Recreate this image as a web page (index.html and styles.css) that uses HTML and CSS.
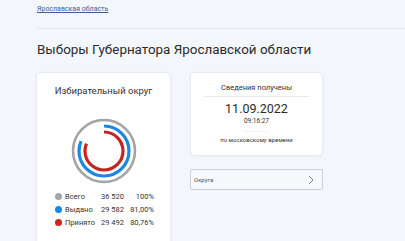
FILE: index.html
```html
<!DOCTYPE html>
<html lang="ru">
<head>
  <meta charset="UTF-8" />
  <meta name="viewport" content="width=device-width, initial-scale=1.0"/>
  <title>Выборы Губернатора Ярославской области</title>
  <link rel="stylesheet" href="styles.css">
</head>
<body>
  <div class="page">
    <nav class="breadcrumbs">
      <a href="#" class="crumb">Ярославская область</a>
    </nav>

    <h1 class="page-title">Выборы Губернатора Ярославской области</h1>

    <div class="cards">
      <section class="card turnout">
        <h2 class="card-title">Избирательный округ</h2>
        <svg class="rings" width="70" height="70" viewBox="0 0 70 70">
          <circle cx="35" cy="35" r="31" fill="none" stroke="#a4a4a4" stroke-width="2.6"/>
          <circle cx="35" cy="35" r="25" fill="none" stroke="#1a88e2" stroke-width="3.2"
                  stroke-dasharray="127.2 200" transform="rotate(-90 35 35)"/>
          <circle cx="35" cy="35" r="19" fill="none" stroke="#c4261f" stroke-width="3.2"
                  stroke-dasharray="96.4 200" transform="rotate(-90 35 35)"/>
        </svg>
        <ul class="legend">
          <li class="legend-row">
            <span class="dot gray"></span>
            <span class="legend-label">Всего</span>
            <span class="legend-value">36 520</span>
            <span class="legend-pct">100%</span>
          </li>
          <li class="legend-row">
            <span class="dot blue"></span>
            <span class="legend-label">Выдано</span>
            <span class="legend-value">29 582</span>
            <span class="legend-pct">81,00%</span>
          </li>
          <li class="legend-row">
            <span class="dot red"></span>
            <span class="legend-label">Принято</span>
            <span class="legend-value">29 492</span>
            <span class="legend-pct">80,76%</span>
          </li>
        </ul>
      </section>

      <div class="side">
        <section class="card info">
          <div class="info-title">Сведения получены</div>
          <div class="info-date">11.09.2022</div>
          <div class="info-time">09:16:27</div>
          <div class="info-note">по московскому времени</div>
        </section>

        <div class="select">
          <span class="select-label">Округа</span>
          <svg class="chevron" width="6" height="10" viewBox="0 0 6 10">
            <path d="M1 1 L5 5 L1 9" fill="none" stroke="#6b7280" stroke-width="0.9"/>
          </svg>
        </div>
      </div>
    </div>
  </div>
</body>
</html>
```

FILE: styles.css
```css
* {
  margin: 0;
  padding: 0;
  box-sizing: border-box;
}

body {
  font-family: Roboto, "Liberation Sans", Arial, sans-serif;
  background-color: #f3f6fb;
  color: #2b2b2b;
  height: 241px;
  overflow: hidden;
}

.page {
  padding-left: 37px;
}

.breadcrumbs {
  height: 29px;
  padding-top: 5px;
  font-size: 7px;
  line-height: 9px;
  border-bottom: 1px solid #e3e8f0;
}

.crumb {
  color: #3d5f8f;
  text-decoration: underline;
}

.page-title {
  font-size: 13.4px;
  font-weight: 400;
  margin-top: 11px;
  line-height: 20px;
  color: #2a2a2a;
}

.cards {
  display: flex;
  gap: 19px;
  margin-top: 12px;
  margin-left: -1px;
}

.card {
  background-color: #ffffff;
  border: 1px solid #e6eaf1;
  border-radius: 5px;
  box-shadow: 0 1px 3px rgba(60, 80, 120, 0.05);
}

.turnout {
  width: 135px;
  height: 180px;
  display: flex;
  flex-direction: column;
  align-items: center;
}

.card-title {
  font-size: 9.5px;
  font-weight: 400;
  margin-top: 12px;
  color: #333;
}

.rings {
  margin-top: 20px;
}

.legend {
  list-style: none;
  margin-top: 6px;
  margin-left: 2px;
  width: 99px;
  display: flex;
  flex-direction: column;
  gap: 4px;
}

.legend-row {
  display: flex;
  align-items: center;
  font-size: 7.5px;
  height: 9px;
  color: #333;
}

.dot {
  width: 7px;
  height: 7px;
  border-radius: 50%;
  margin-right: 3px;
}

.dot.gray { background-color: #a6a6a6; }
.dot.blue { background-color: #1589e6; }
.dot.red { background-color: #cf2419; }

.legend-label {
  width: 36px;
}

.legend-value {
  width: 25px;
}

.legend-pct {
  flex: 1;
  text-align: right;
}

.side {
  width: 133px;
  display: flex;
  flex-direction: column;
  gap: 13px;
}

.info {
  height: 84px;
  display: flex;
  flex-direction: column;
  align-items: center;
  padding: 10px 12px 0;
}

.info-title {
  font-size: 7.5px;
  color: #333;
  width: 100%;
  text-align: center;
  padding-bottom: 4px;
  border-bottom: 1px solid #e8ebf0;
}

.info-date {
  font-size: 12.5px;
  margin-top: 4px;
  line-height: 15px;
  color: #2a2a2a;
}

.info-time {
  font-size: 6.5px;
  margin-top: 1px;
  color: #333;
  padding-bottom: 6px;
  border-bottom: 1px solid #f0f2f5;
}

.info-note {
  font-size: 6px;
  margin-top: 4px;
  color: #333;
}

.select {
  height: 21px;
  display: flex;
  align-items: center;
  justify-content: space-between;
  padding: 0 8px 0 3px;
  background-color: #f8f9fc;
  border: 1px solid #c9cfdb;
  border-radius: 2px;
}

.select-label {
  font-size: 6px;
  color: #4b5563;
}
```
